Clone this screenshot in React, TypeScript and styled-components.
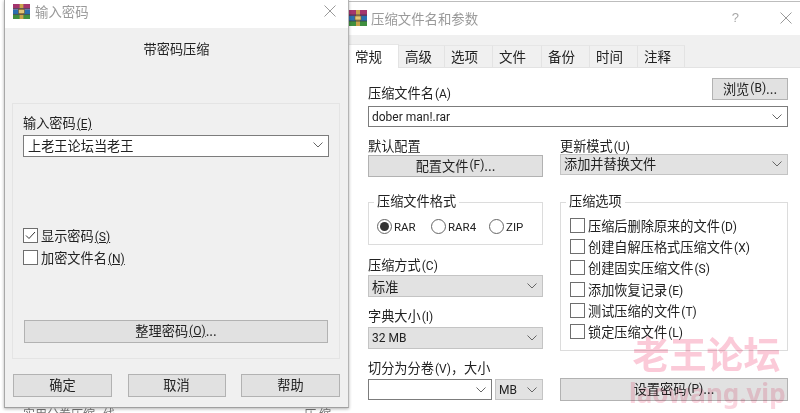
import React from 'react'
import styled, { createGlobalStyle } from 'styled-components'

const Global = createGlobalStyle`
    html, body {
        margin: 0;
        padding: 0;
        background: #fff;
    }
    * {
        box-sizing: border-box;
    }
`;

const Desktop = styled.div`
    position: relative;
    width: 800px;
    height: 413px;
    overflow: hidden;
    background: #fff;
    color: #222;
    font-family: "Noto Sans CJK SC", "Noto Sans", sans-serif;
    font-size: 13.2px;
    filter: blur(0.35px);
`;

const LeftWindow = styled.div`
    position: absolute;
    left: 4px;
    top: 0;
    width: 345px;
    height: 408px;
    background: #f0f0f0;
    border-left: 1px solid #a8a8a8;
    border-right: 1px solid #b4b4b4;
    border-bottom: 1px solid #a0a0a0;
    box-shadow: 0 1px 3px rgba(0, 0, 0, 0.3);
    z-index: 2;
    display: flex;
    flex-direction: column;
`;

const RightWindow = styled.div`
    position: absolute;
    left: 349px;
    top: 1px;
    width: 451px;
    height: 412px;
    background: #fff;
    border-top: 1px solid #bdbdbd;
    display: flex;
    flex-direction: column;
`;

const TitleBar = styled.div<{ $h: number; $pl: number; $pb: number; $gap: number }>`
    height: ${p => p.$h}px;
    flex: none;
    display: flex;
    align-items: center;
    padding: 0 0 ${p => p.$pb}px ${p => p.$pl}px;
    gap: ${p => p.$gap}px;
    background: #fff;
    color: #9a9a9a;
    font-size: 13.4px;
`;

const TitleSpacer = styled.div`
    flex: 1;
`;

const Help = styled.span`
    color: #a8a8a8;
    font-family: "Liberation Sans", sans-serif;
    font-size: 13px;
    margin-right: 37px;
`;

const CloseIcon = styled.svg<{ $mr: number }>`
    width: 12px;
    height: 12px;
    margin-right: ${p => p.$mr}px;
    flex: none;
`;

const IconSvg = styled.svg`
    flex: none;
`;

const Subtitle = styled.div`
    height: 40px;
    flex: none;
    display: flex;
    align-items: center;
    justify-content: center;
`;

const PasswordPanel = styled.div`
    margin: 35px 8px 0 7px;
    height: 256px;
    flex: none;
    border: 1px solid #e4e4e4;
    padding: 9px 10px 0 10px;
    display: flex;
    flex-direction: column;
`;

const FieldLabel = styled.div<{ $mt?: number }>`
    line-height: 19px;
    height: 19px;
    margin-top: ${p => p.$mt ?? 0}px;
    white-space: nowrap;
`;

const Key = styled.span`
    font-family: Roboto, sans-serif;
    font-size: 12px;
    text-decoration: underline;
    text-underline-offset: 1px;
    margin-left: 1px;
`;

const Plain = styled.span`
    font-family: Roboto, sans-serif;
    font-size: 12px;
    margin-left: 1px;
`;

const Combo = styled.div<{ $w?: number; $h: number; $gray?: boolean; $big?: boolean; $raise?: boolean; $mt?: number; $mb?: number }>`
    width: ${p => (p.$w ? `${p.$w}px` : '100%')};
    height: ${p => p.$h}px;
    margin-top: ${p => p.$mt ?? 0}px;
    margin-bottom: ${p => p.$mb ?? 0}px;
    flex: none;
    display: flex;
    align-items: center;
    justify-content: space-between;
    padding: 0 5px ${p => (p.$raise ? 2 : 0)}px ${p => (p.$big ? 4 : 3)}px;
    background: ${p => (p.$gray ? '#e2e2e2' : '#fff')};
    border: 1px solid ${p => (p.$gray ? '#c4c4c4' : '#7c7c7c')};
    white-space: nowrap;
`;

const Latin = styled.span`
    font-family: Roboto, sans-serif;
    font-size: 12px;
`;

const Chevron = styled.svg`
    width: 10px;
    height: 6px;
    flex: none;
    margin-left: auto;
`;

const CheckList = styled.div<{ $gap: number; $top: number }>`
    display: flex;
    flex-direction: column;
    gap: ${p => p.$gap}px;
    margin-top: ${p => p.$top}px;
`;

const CheckRow = styled.div<{ $ml?: number }>`
    display: flex;
    align-items: center;
    gap: 3px;
    height: 14px;
    margin-left: ${p => p.$ml ?? 0}px;
    white-space: nowrap;
`;

const Box = styled.div`
    width: 15px;
    height: 15px;
    flex: none;
    background: #fff;
    border: 1px solid #6e6e6e;
    display: flex;
    align-items: center;
    justify-content: center;
`;

const Button = styled.div<{ $w?: number; $h: number; $mt?: number; $mb?: number; $mx?: number }>`
    width: ${p => (p.$w ? `${p.$w}px` : 'auto')};
    height: ${p => p.$h}px;
    margin: ${p => p.$mt ?? 0}px ${p => p.$mx ?? 0}px ${p => p.$mb ?? 0}px;
    padding-bottom: 2px;
    flex: none;
    display: flex;
    align-items: center;
    justify-content: center;
    background: #e1e1e1;
    border: 1px solid #b2b2b2;
    white-space: nowrap;
`;

const Spacer = styled.div`
    flex: 1;
`;

const DialogButtons = styled.div`
    display: flex;
    justify-content: space-between;
    margin: 15px 8px 0 8px;
`;

const TabStrip = styled.div`
    height: 33px;
    flex: none;
    margin-top: 1px;
    padding-top: 10px;
    background: #f0f0f0;
    display: flex;
    border-bottom: 1px solid #e3e3e3;
`;

const Tab = styled.div<{ $w: number; $active?: boolean }>`
    width: ${p => p.$w}px;
    height: ${p => (p.$active ? 24 : 22)}px;
    margin-top: ${p => (p.$active ? -1 : 0)}px;
    padding: 0 0 1px 6px;
    display: flex;
    align-items: center;
    font-size: 13.5px;
    background: ${p => (p.$active ? '#fff' : '#f0f0f0')};
    border-right: 1px solid #e3e3e3;
    border-top: 1px solid #e6e6e6;
    position: relative;
    z-index: ${p => (p.$active ? 1 : 0)};
`;

const Content = styled.div`
    padding: 9px 12px 0 19px;
    display: flex;
    flex-direction: column;
`;

const NameRow = styled.div`
    display: flex;
    justify-content: space-between;
    height: 29px;
`;

const NameLabel = styled(FieldLabel)`
    margin-top: 6px;
`;

const TwoCols = styled.div`
    display: grid;
    grid-template-columns: 175px 228px;
    column-gap: 17px;
`;

const Col = styled.div`
    display: flex;
    flex-direction: column;
`;

const Group = styled.div<{ $h: number; $mt: number }>`
    position: relative;
    height: ${p => p.$h}px;
    margin-top: ${p => p.$mt}px;
    border: 1px solid #dcdcdc;
`;

const Legend = styled.div`
    position: absolute;
    top: -11px;
    left: 5px;
    padding: 0 3px;
    line-height: 18px;
    background: #fff;
`;

const RadioRow = styled.div`
    display: flex;
    margin: 16px 0 0 8px;
`;

const Radio = styled.div<{ $w: number }>`
    width: ${p => p.$w}px;
    display: flex;
    align-items: center;
    gap: 2px;
    font-family: Roboto, sans-serif;
    font-size: 11.5px;
`;

const RadioDot = styled.div<{ $on?: boolean }>`
    width: 15px;
    height: 15px;
    flex: none;
    border-radius: 50%;
    border: 1px solid #666;
    background: #fff;
    display: flex;
    align-items: center;
    justify-content: center;

    &::after {
        content: '';
        display: ${p => (p.$on ? 'block' : 'none')};
        width: 9px;
        height: 9px;
        border-radius: 50%;
        background: #333;
    }
`;

const SplitRow = styled.div`
    display: flex;
    gap: 3px;
    margin-top: 2px;
`;

const Watermark = styled.div`
    position: absolute;
    left: 629px;
    top: 328px;
    width: 155px;
    z-index: 3;
    color: #fbcad8;
    mix-blend-mode: multiply;
    font-weight: 700;
    text-align: center;
    pointer-events: none;
`;

const WatermarkCn = styled.div`
    font-size: 37px;
    line-height: 50px;
`;

const WatermarkEn = styled.div`
    font-family: "Noto Sans", sans-serif;
    font-size: 26px;
    line-height: 30px;
    color: #fbd6e0;
`;

const Strip = styled.div`
    position: absolute;
    left: 23px;
    top: 408px;
    width: 308px;
    height: 5px;
    overflow: hidden;
    display: flex;
    justify-content: space-between;
    color: #777;
    font-size: 12px;
    line-height: 1;
    white-space: nowrap;
`;

const RarIcon: React.FC<{ w: number; h: number }> = ({ w, h }) => (
    <IconSvg width={w} height={h} viewBox="0 0 18 16" preserveAspectRatio="none">
        <rect x="0" y="0" width="18" height="5" fill="#a4356d" />
        <rect x="0" y="5" width="18" height="1" fill="#6f3a7e" />
        <rect x="0" y="6" width="18" height="5" fill="#2b6fb0" />
        <rect x="0" y="11" width="18" height="5" fill="#3f8f3e" />
        <rect x="7" y="0" width="4" height="16" fill="#c9a24a" />
        <rect x="6" y="6" width="6" height="4" fill="#e2c77a" stroke="#7c5a1e" strokeWidth="0.6" />
        <rect x="0" y="4.6" width="18" height="0.8" fill="#3c3c4a" />
        <rect x="0" y="10.6" width="18" height="0.8" fill="#3c3c4a" />
    </IconSvg>
);

const Close: React.FC<{ mr: number }> = ({ mr }) => (
    <CloseIcon $mr={mr} viewBox="0 0 12 12">
        <path d="M0.5 0.5 L11.5 11.5 M11.5 0.5 L0.5 11.5" stroke="#9a9a9a" strokeWidth="1" fill="none" />
    </CloseIcon>
);

const Down = () => (
    <Chevron viewBox="0 0 10 6">
        <path d="M0.5 0.5 L5 5 L9.5 0.5" stroke="#666" strokeWidth="1" fill="none" />
    </Chevron>
);

const Check = () => (
    <svg width="11" height="9" viewBox="0 0 11 9">
        <path d="M1 4.5 L4 7.5 L10 1" stroke="#333" strokeWidth="1" fill="none" />
    </svg>
);

const tabs = [
    { name: '常规', w: 50, active: true },
    { name: '高级', w: 46 },
    { name: '选项', w: 48 },
    { name: '文件', w: 49 },
    { name: '备份', w: 48 },
    { name: '时间', w: 48 },
    { name: '注释', w: 47 },
];

const options = [
    { text: '压缩后删除原来的文件', key: 'D' },
    { text: '创建自解压格式压缩文件', key: 'X' },
    { text: '创建固实压缩文件', key: 'S' },
    { text: '添加恢复记录', key: 'E' },
    { text: '测试压缩的文件', key: 'T' },
    { text: '锁定压缩文件', key: 'L' },
];

const App: React.FC = () => {
    return (
        <Desktop>
            <Global />
            <LeftWindow>
                <TitleBar $h={28} $pl={8} $pb={6} $gap={5}>
                    <RarIcon w={17} h={15} />
                    <span>输入密码</span>
                    <TitleSpacer />
                    <Close mr={12} />
                </TitleBar>
                <Subtitle>带密码压缩</Subtitle>
                <PasswordPanel>
                    <FieldLabel>输入密码<Key>(E)</Key></FieldLabel>
                    <Combo $h={22} $big $raise $mt={3}>上老王论坛当老王<Down /></Combo>
                    <CheckList $gap={8} $top={71}>
                        <CheckRow><Box><Check /></Box><span>显示密码<Key>(S)</Key></span></CheckRow>
                        <CheckRow><Box /><span>加密文件名<Key>(N)</Key></span></CheckRow>
                    </CheckList>
                    <Spacer />
                    <Button $h={23} $mb={15} $mx={1}>整理密码<Key>(O)</Key>...</Button>
                </PasswordPanel>
                <DialogButtons>
                    <Button $w={99} $h={23}>确定</Button>
                    <Button $w={98} $h={23}>取消</Button>
                    <Button $w={99} $h={23}>帮助</Button>
                </DialogButtons>
            </LeftWindow>

            <RightWindow>
                <TitleBar $h={32} $pl={0} $pb={1} $gap={4}>
                    <RarIcon w={18} h={16} />
                    <span>压缩文件名和参数</span>
                    <TitleSpacer />
                    <Help>?</Help>
                    <Close mr={8} />
                </TitleBar>
                <TabStrip>
                    {tabs.map(t => (
                        <Tab key={t.name} $w={t.w} $active={t.active}>{t.name}</Tab>
                    ))}
                </TabStrip>
                <Content>
                    <NameRow>
                        <NameLabel>压缩文件名<Plain>(A)</Plain></NameLabel>
                        <Button $w={76} $h={22} $mt={1}>浏览<Plain>(B)</Plain>...</Button>
                    </NameRow>
                    <Combo $h={21} $mb={9}><Latin>dober man!.rar</Latin><Down /></Combo>
                    <TwoCols>
                        <Col>
                            <FieldLabel>默认配置</FieldLabel>
                            <Button $h={22}>配置文件<Plain>(F)</Plain>...</Button>
                            <Group $h={43} $mt={25}>
                                <Legend>压缩文件格式</Legend>
                                <RadioRow>
                                    <Radio $w={54}><RadioDot $on />RAR</Radio>
                                    <Radio $w={58}><RadioDot />RAR4</Radio>
                                    <Radio $w={50}><RadioDot />ZIP</Radio>
                                </RadioRow>
                            </Group>
                            <FieldLabel $mt={10}>压缩方式<Plain>(C)</Plain></FieldLabel>
                            <Combo $h={22} $gray $mt={1}>标准<Down /></Combo>
                            <FieldLabel $mt={9}>字典大小<Plain>(I)</Plain></FieldLabel>
                            <Combo $h={22} $gray $mt={2}><Latin>32 MB</Latin><Down /></Combo>
                            <FieldLabel $mt={9}>切分为分卷<Plain>(V)</Plain>，大小</FieldLabel>
                            <SplitRow>
                                <Combo $w={124} $h={21}><Down /></Combo>
                                <Combo $w={48} $h={21} $gray><Latin>MB</Latin><Down /></Combo>
                            </SplitRow>
                        </Col>
                        <Col>
                            <FieldLabel>更新模式<Plain>(U)</Plain></FieldLabel>
                            <Combo $h={21} $gray $raise $mt={-1}>添加并替换文件<Down /></Combo>
                            <Group $h={149} $mt={27}>
                                <Legend>压缩选项</Legend>
                                <CheckList $gap={7.4} $top={15}>
                                    {options.map(o => (
                                        <CheckRow key={o.key} $ml={9}>
                                            <Box /><span>{o.text}<Plain>({o.key})</Plain></span>
                                        </CheckRow>
                                    ))}
                                </CheckList>
                            </Group>
                            <Button $h={23} $mt={27}>设置密码<Plain>(P)</Plain>...</Button>
                        </Col>
                    </TwoCols>
                </Content>
            </RightWindow>

            <Watermark>
                <WatermarkCn>老王论坛</WatermarkCn>
                <WatermarkEn>laowang.vip</WatermarkEn>
            </Watermark>
            <Strip>
                <span>实用分卷压缩 &nbsp; 线</span>
                <span>压 缩</span>
            </Strip>
        </Desktop>
    )
}

export default App
